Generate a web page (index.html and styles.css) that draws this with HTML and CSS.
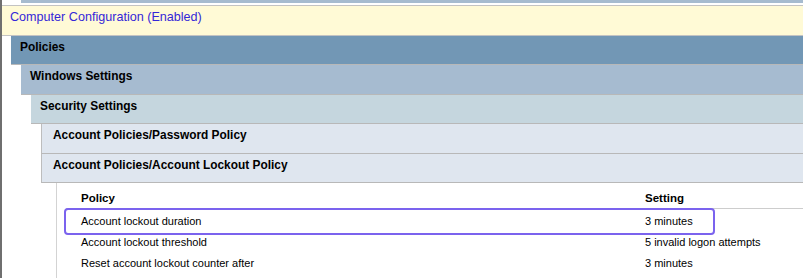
FILE: index.html
```html
<!DOCTYPE html>
<html lang="en">
<head>
<meta charset="utf-8">
<title>Group Policy Report</title>
<link rel="stylesheet" href="styles.css">
</head>
<body>
<div class="frame">
  <div class="strip"></div>
  <div class="gpo">Computer Configuration (Enabled)</div>
  <section class="node lvl1">
    <div class="bar">Policies</div>
    <section class="node lvl2">
      <div class="bar tall">Windows Settings</div>
      <section class="node lvl3">
        <div class="bar">Security Settings</div>
        <section class="node lvl4">
          <div class="bar tall">Account Policies/Password Policy</div>
        </section>
        <section class="node lvl4">
          <div class="bar">Account Policies/Account Lockout Policy</div>
          <div class="content">
            <div class="row head">
              <div class="cell name">Policy</div>
              <div class="cell">Setting</div>
            </div>
            <div class="rows">
              <div class="row marked">
                <span class="mark"></span>
                <div class="cell name">Account lockout duration</div>
                <div class="cell">3 minutes</div>
              </div>
              <div class="row">
                <div class="cell name">Account lockout threshold</div>
                <div class="cell">5 invalid logon attempts</div>
              </div>
              <div class="row">
                <div class="cell name">Reset account lockout counter after</div>
                <div class="cell">3 minutes</div>
              </div>
            </div>
          </div>
        </section>
      </section>
    </section>
  </section>
</div>
</body>
</html>
```
FILE: styles.css
```css
* {
  box-sizing: content-box;
}

body {
  margin: 0;
  background: #ffffff;
  font-family: "Liberation Sans", Arial, sans-serif;
  color: #000000;
}

.frame {
  border-left: 2px solid #6f6f6f;
  height: 278px;
  overflow: hidden;
}

/* tail of the section above */
.strip {
  height: 3px;
  margin-left: 19px;
  margin-bottom: 2px;
  background: #a6bbcf;
}

.gpo {
  margin-left: -2px;
  height: 25px;
  padding: 4px 0 0 9px;
  border: 1px solid #c3c3c3;
  border-right: 0;
  background: #fffad6;
  color: #3527d8;
  font-size: 12.6px;
  line-height: 15px;
}

.node.lvl1 {
  margin-left: 9px;
}

.node .node {
  margin-left: 10px;
}

.bar {
  height: 24px;
  padding: 4px 0 0 9px;
  border-bottom: 1px solid #b8b8b8;
  font-size: 11.9px;
  font-weight: bold;
  line-height: 15px;
}

.bar.tall {
  height: 25px;
}

.lvl1 > .bar { background: #7297b5; }
.lvl2 > .bar { background: #a6bbd0; }
.lvl3 > .bar { background: #c5d6de; }

.lvl4 > .bar {
  background: #dfe6ef;
  border-left: 1px solid #bdbdbd;
  padding-left: 11px;
}

.content {
  margin-left: 15px;
  padding: 5px 0 0 9px;
  height: 120px;
  border-left: 1px solid #d3d3d3;
}

.row {
  display: grid;
  grid-template-columns: 579px 1fr;
  position: relative;
  font-size: 11px;
  line-height: 21px;
  height: 21px;
}

.row.head {
  height: 20px;
  line-height: 20px;
  font-size: 11.5px;
  font-weight: bold;
  border-bottom: 1px solid #cdcdcd;
}

.rows {
  padding-top: 2px;
}

.cell.name {
  padding-left: 15px;
}

/* highlight ring around the selected setting */
.mark {
  position: absolute;
  left: -2px;
  top: -3px;
  width: 651px;
  height: 27px;
  box-sizing: border-box;
  border: 2px solid #7b63ee;
  border-radius: 4px;
}
```
